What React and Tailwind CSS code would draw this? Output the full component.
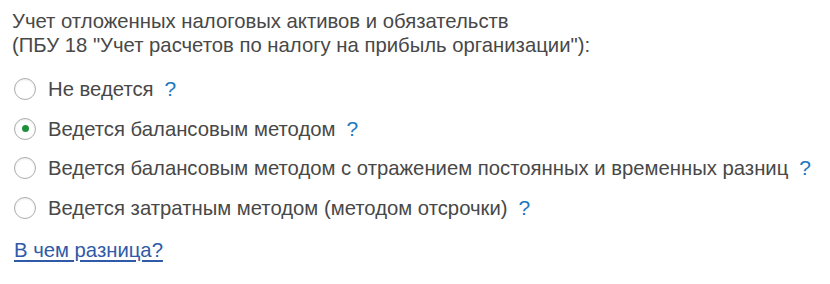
import React, { useState } from 'react';

const options = [
  { id: 'none', label: 'Не ведется' },
  { id: 'balance', label: 'Ведется балансовым методом' },
  { id: 'balanceDiff', label: 'Ведется балансовым методом с отражением постоянных и временных разниц' },
  { id: 'cost', label: 'Ведется затратным методом (методом отсрочки)' },
];

function Radio({ checked }) {
  return (
    <span className="w-[22px] h-[22px] rounded-full border-[1.5px] border-[#adadad] bg-white flex items-center justify-center shrink-0 shadow-[inset_0_1px_2px_rgba(0,0,0,0.08)]">
      {checked && <span className="w-[7px] h-[7px] rounded-full bg-[#1f8f3a]" />}
    </span>
  );
}

export default function App() {
  const [value, setValue] = useState('balance');

  return (
    <div className="w-[830px] h-[284px] bg-white pl-[14px] pt-[9px] text-[20.3px] leading-[24px] text-[#484848] font-['Liberation_Sans',Arial,sans-serif]">
      <div className="-ml-[2px]">
        Учет отложенных налоговых активов и обязательств
        <br />
        (ПБУ 18 "Учет расчетов по налогу на прибыль организации"):
      </div>

      <div className="mt-[12px] flex flex-col">
        {options.map((opt) => (
          <label
            key={opt.id}
            className="h-[39.7px] flex items-center cursor-pointer"
            onClick={() => setValue(opt.id)}
          >
            <Radio checked={value === opt.id} />
            <span className="ml-[12px]">{opt.label}</span>
            <span className="ml-[11px] text-[21px] text-[#1d78c1]">?</span>
          </label>
        ))}
      </div>

      <a href="#" className="inline-block mt-[10px] text-[#2e5aa8] underline underline-offset-[3px]">
        В чем разница?
      </a>
    </div>
  );
}
